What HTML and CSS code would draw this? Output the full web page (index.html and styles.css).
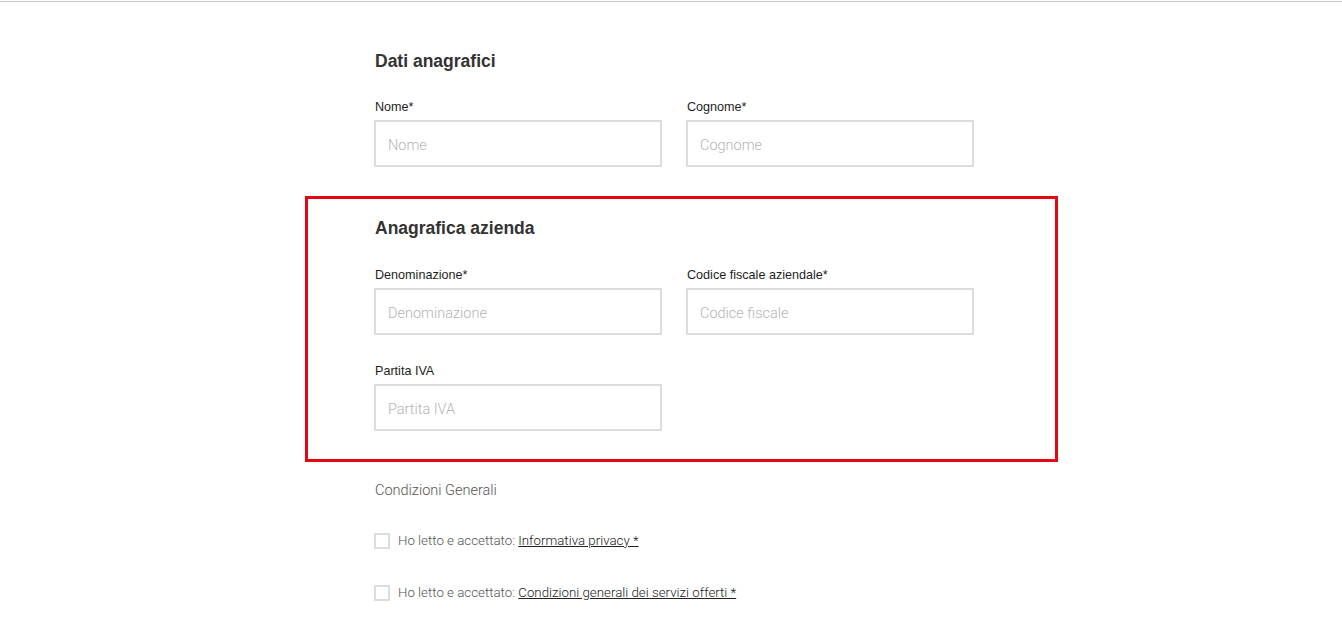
FILE: index.html
```html
<!DOCTYPE html>
<html>
<head lang="it">
<meta charset="UTF-8">
<title>Registrazione</title>
<link rel="stylesheet" href="styles.css">
</head>
<body>
<div class="topline"></div>

<div class="page">
  <div class="section first">
    <h2>Dati anagrafici</h2>
    <div class="row">
      <div class="field">
        <label>Nome*</label>
        <input type="text" placeholder="Nome">
      </div>
      <div class="field">
        <label>Cognome*</label>
        <input type="text" placeholder="Cognome">
      </div>
    </div>
  </div>

  <div class="section highlight">
    <h2>Anagrafica azienda</h2>
    <div class="row">
      <div class="field">
        <label>Denominazione*</label>
        <input type="text" placeholder="Denominazione">
      </div>
      <div class="field">
        <label>Codice fiscale aziendale*</label>
        <input type="text" placeholder="Codice fiscale">
      </div>
    </div>
    <div class="row">
      <div class="field">
        <label>Partita IVA</label>
        <input type="text" placeholder="Partita IVA">
      </div>
    </div>
  </div>

  <div class="terms">
    <p class="terms-title">Condizioni Generali</p>
    <div class="check">
      <span class="box"></span>
      <span>Ho letto e accettato: <a href="#">Informativa privacy *</a></span>
    </div>
    <div class="check">
      <span class="box"></span>
      <span>Ho letto e accettato: <a href="#">Condizioni generali dei servizi offerti *</a></span>
    </div>
  </div>
</div>
</body>
</html>
```

FILE: styles.css
```css
body {
  margin: 0;
  background-color: #fff;
  font-family: "Liberation Sans", Arial, sans-serif;
}

.topline {
  height: 1px;
  margin-top: 1px;
  background-color: #c6c6c6;
}

.page {
  width: 600px;
  margin: 0 auto;
  padding-left: 6px;
}

.section h2 {
  margin: 0 0 27px 1px;
  font-size: 17.5px;
  line-height: 22px;
  font-weight: bold;
  color: #333;
}

.section.first {
  padding-top: 48px;
}

.section.highlight {
  margin: 29px -84px 0 -69px;
  padding: 18px 81px 28px 66px;
  border: 3px solid #e30613;
}

.section.highlight h2 {
  margin-bottom: 28px;
}

.row {
  display: grid;
  grid-template-columns: 288px 288px;
  column-gap: 24px;
}

.row + .row {
  margin-top: 28px;
}

.field label {
  display: block;
  margin: 0 0 5px 1px;
  font-size: 12.6px;
  line-height: 16px;
  color: #1e1e1e;
}

.field input {
  display: block;
  box-sizing: border-box;
  width: 288px;
  height: 47px;
  margin: 0;
  padding: 3px 12px 0 12px;
  border: 2px solid #dcdcdc;
  border-radius: 0;
  outline: none;
  font-family: Roboto, sans-serif;
  font-weight: 300;
  font-size: 14.5px;
  color: #333;
}

.field input::placeholder {
  color: #b4b4b4;
}

.terms {
  padding-top: 19px;
  font-family: Roboto, sans-serif;
  font-weight: 300;
  font-size: 13.3px;
  line-height: 20px;
  color: #555;
}

.terms-title {
  margin: 0 0 30px 1px;
  font-size: 14.5px;
}

.check {
  display: flex;
  align-items: center;
  gap: 8px;
  height: 20px;
}

.check + .check {
  margin-top: 32px;
}

.check .box {
  box-sizing: border-box;
  width: 16px;
  height: 16px;
  border: 2px solid #dcdcdc;
}

.check a {
  color: #222;
  text-decoration: underline;
}
```
